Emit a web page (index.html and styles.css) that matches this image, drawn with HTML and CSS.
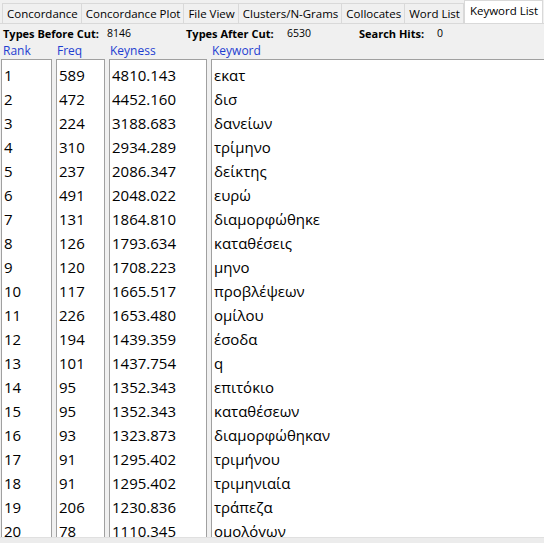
FILE: index.html
```html
<!DOCTYPE html>
<html>
<head>
<meta charset="utf-8">
<link rel="stylesheet" href="styles.css">
</head>
<body>
<div class="app">
  <div class="tabs">
    <div class="tab">Concordance</div>
    <div class="tab">Concordance Plot</div>
    <div class="tab">File View</div>
    <div class="tab">Clusters/N-Grams</div>
    <div class="tab">Collocates</div>
    <div class="tab">Word List</div>
    <div class="tab active">Keyword List</div>
  </div>
  <div class="stats">
    <span class="lbl l1">Types Before Cut:</span><span class="val v1">8146</span>
    <span class="lbl l2">Types After Cut:</span><span class="val v2">6530</span>
    <span class="lbl l3">Search Hits:</span><span class="val v3">0</span>
  </div>
  <div class="cols">
    <div class="col c-rank">
      <div class="hdr">Rank</div>
      <div class="box">
        <div>1</div><div>2</div><div>3</div><div>4</div><div>5</div><div>6</div><div>7</div><div>8</div><div>9</div><div>10</div>
        <div>11</div><div>12</div><div>13</div><div>14</div><div>15</div><div>16</div><div>17</div><div>18</div><div>19</div><div>20</div>
      </div>
    </div>
    <div class="col c-freq">
      <div class="hdr">Freq</div>
      <div class="box">
        <div>589</div><div>472</div><div>224</div><div>310</div><div>237</div><div>491</div><div>131</div><div>126</div><div>120</div><div>117</div>
        <div>226</div><div>194</div><div>101</div><div>95</div><div>95</div><div>93</div><div>91</div><div>91</div><div>206</div><div>78</div>
      </div>
    </div>
    <div class="col c-key">
      <div class="hdr">Keyness</div>
      <div class="box">
        <div>4810.143</div><div>4452.160</div><div>3188.683</div><div>2934.289</div><div>2086.347</div><div>2048.022</div><div>1864.810</div><div>1793.634</div><div>1708.223</div><div>1665.517</div>
        <div>1653.480</div><div>1439.359</div><div>1437.754</div><div>1352.343</div><div>1352.343</div><div>1323.873</div><div>1295.402</div><div>1295.402</div><div>1230.836</div><div>1110.345</div>
      </div>
    </div>
    <div class="col c-word">
      <div class="hdr">Keyword</div>
      <div class="box">
        <div>εκατ</div><div>δισ</div><div>δανείων</div><div>τρίμηνο</div><div>δείκτης</div><div>ευρώ</div><div>διαμορφώθηκε</div><div>καταθέσεις</div><div>μηνο</div><div>προβλέψεων</div>
        <div>ομίλου</div><div>έσοδα</div><div>q</div><div>επιτόκιο</div><div>καταθέσεων</div><div>διαμορφώθηκαν</div><div>τριμήνου</div><div>τριμηνιαία</div><div>τράπεζα</div><div>ομολόγων</div>
      </div>
    </div>
  </div>
  <div class="bottom"></div>
</div>
</body>
</html>
```
FILE: styles.css
```css
html, body {
  margin: 0;
  padding: 0;
  background: #f0f0f0;
  overflow: hidden;
}
.app {
  width: 544px;
  height: 543px;
  display: flex;
  flex-direction: column;
  font-family: "Open Sans", "Noto Sans", sans-serif;
  color: #000;
  overflow: hidden;
}
.tabs {
  display: flex;
  align-items: flex-end;
  height: 24px;
  padding-left: 2px;
  border-bottom: 1px solid #d9d9d9;
  box-sizing: border-box;
}
.tab {
  height: 20px;
  line-height: 19px;
  font-size: 11.5px;
  padding: 0 3px 0 4px;
  border: 1px solid #d9d9d9;
  border-bottom: none;
  margin-right: -1px;
  background: #f0f0f0;
  box-sizing: border-box;
  white-space: nowrap;
  flex-shrink: 0;
}
.tab.active {
  background: #fff;
  height: 23px;
  line-height: 20px;
  padding: 0 4px 0 5px;
  margin-left: 1px;
}
.stats {
  height: 18px;
  display: flex;
  align-items: center;
  font-size: 11px;
  padding-left: 3px;
  white-space: nowrap;
}
.stats span { flex-shrink: 0; display: block; }
.lbl { font-weight: bold; }
.val { font-size: 10.5px; }
.l1 { width: 104px; }
.v1 { width: 79px; }
.l2 { width: 101px; }
.v2 { width: 72px; }
.l3 { width: 78px; }
.cols {
  display: flex;
  flex: 1;
  min-height: 0;
  gap: 4px;
  padding-left: 1px;
}
.col {
  display: flex;
  flex-direction: column;
  min-height: 0;
  flex-shrink: 0;
}
.hdr {
  height: 17px;
  line-height: 17px;
  font-size: 12px;
  color: #1e3ed0;
  padding-left: 1px;
}
.c-rank .hdr { padding-left: 2px; }
.box {
  flex: 1;
  background: #fff;
  border: 1px solid #a0a0a0;
  border-bottom: none;
  overflow: hidden;
  font-size: 15px;
  padding-top: 3px;
  min-height: 0;
}
.box div {
  height: 24px;
  line-height: 24px;
  padding-left: 2px;
  white-space: nowrap;
}
.c-rank { width: 51px; }
.c-freq { width: 49px; }
.c-key { width: 98px; }
.c-word { flex: 1; }
.c-word .box { border-right: none; }
.bottom {
  height: 5px;
  background: #ececec;
  border-top: 1px solid #e0e0e0;
}
```
